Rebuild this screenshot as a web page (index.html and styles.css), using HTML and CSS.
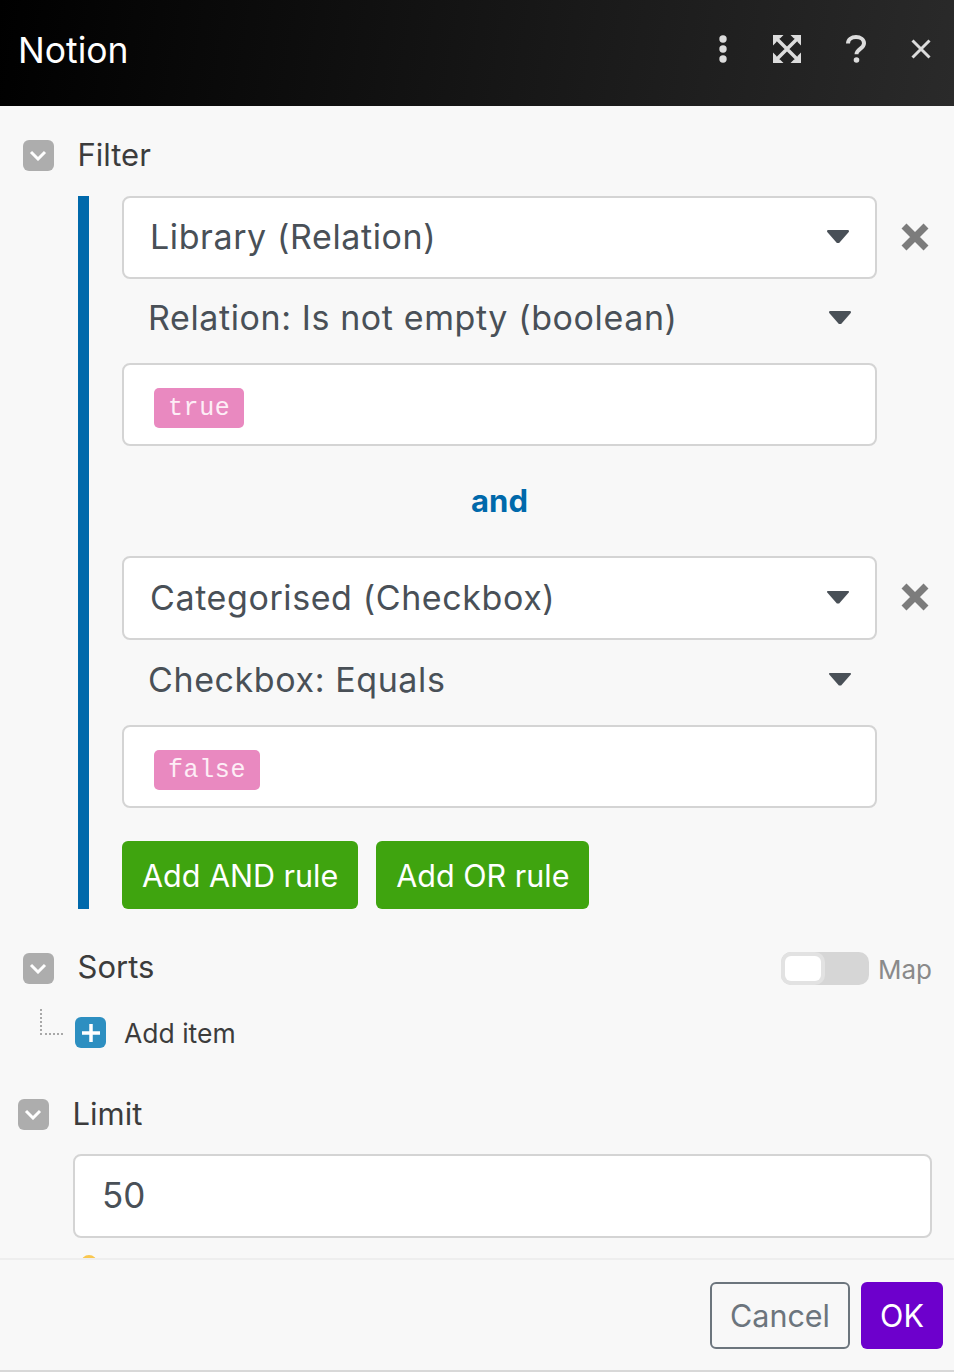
FILE: index.html
```html
<!DOCTYPE html>
<html lang="en">

<head>
  <meta charset="UTF-8">
  <meta name="viewport" content="width=device-width, initial-scale=1.0">
  <title>Notion</title>
  <link rel="stylesheet" href="styles.css">
</head>

<body>
  <div class="modal">
    <header class="modal-header">
      <h1>Notion</h1>
      <div class="header-icons">
        <svg class="icon-dots" viewBox="0 0 10 28"><circle cx="5" cy="4" r="3.700"/><circle cx="5" cy="14" r="3.700"/><circle cx="5" cy="24" r="3.700"/></svg>
        <svg class="icon-expand" viewBox="0 0 28 28"><path d="M0 0h10.500L7.500 3 6 4 4 6 3 7.500 0 10.500zM28 0v10.500l-3-3L24 6l-2-2-1.500-1-3-3zM28 28H17.500l3-3L22 24l2-2 1-1.500 3-3zM0 28V17.500l3 3L4 22l2 2 1.500 1 3 3z"/><path class="expand-x" d="M3 3l22 22M25 3L3 25"/></svg>
        <svg class="icon-help" viewBox="0 0 20 28"><path class="help-stroke" d="M2 8.500C2 4.500 5.500 2 10 2c4.500 0 8 2.500 8 6.300 0 5.500-7.500 5.700-7.500 11"/><circle cx="10.500" cy="25" r="2.800"/></svg>
        <svg class="icon-close" viewBox="0 0 20 20"><path d="M1.500 1.500l17 17M18.500 1.500l-17 17"/></svg>
      </div>
    </header>

    <main class="modal-body">
      <div class="section-head">
        <span class="collapse"><svg viewBox="0 0 18 11"><path d="M2 2l7 7 7-7"/></svg></span>
        <span class="section-title">Filter</span>
      </div>

      <div class="filter-block">
        <div class="rule">
          <div class="rule-row">
            <div class="field select-field">Library (Relation)<span class="caret"></span></div>
            <svg class="rule-remove" viewBox="0 0 28 28"><path d="M3 3l22 22M25 3L3 25"/></svg>
          </div>
          <div class="operator">Relation: Is not empty (boolean)<span class="caret"></span></div>
          <div class="field value-field"><span class="tag">true</span></div>
        </div>

        <div class="and-label">and</div>

        <div class="rule rule-second">
          <div class="rule-row">
            <div class="field select-field">Categorised (Checkbox)<span class="caret"></span></div>
            <svg class="rule-remove" viewBox="0 0 28 28"><path d="M3 3l22 22M25 3L3 25"/></svg>
          </div>
          <div class="operator">Checkbox: Equals<span class="caret"></span></div>
          <div class="field value-field"><span class="tag">false</span></div>
        </div>

        <div class="rule-buttons">
          <button class="btn-green">Add AND rule</button>
          <button class="btn-green">Add OR rule</button>
        </div>
      </div>

      <div class="section-head sorts-head">
        <span class="collapse"><svg viewBox="0 0 18 11"><path d="M2 2l7 7 7-7"/></svg></span>
        <span class="section-title">Sorts</span>
        <div class="map-toggle">
          <span class="toggle"><span class="toggle-knob"></span></span>
          <span class="map-label">Map</span>
        </div>
      </div>

      <div class="add-item">
        <span class="tree-line"></span>
        <span class="plus"><svg viewBox="0 0 20 20"><path d="M10 1v18M1 10h18"/></svg></span>
        <span class="add-label">Add item</span>
      </div>

      <div class="section-head limit-head">
        <span class="collapse"><svg viewBox="0 0 18 11"><path d="M2 2l7 7 7-7"/></svg></span>
        <span class="section-title">Limit</span>
      </div>
      <div class="field limit-field">50</div>
      <span class="hint-dot"></span>
    </main>

    <footer class="modal-footer">
      <button class="btn-cancel">Cancel</button>
      <button class="btn-ok">OK</button>
    </footer>
  </div>
</body>

</html>
```

FILE: styles.css
```css
* {
  margin: 0;
  padding: 0;
  box-sizing: border-box;
}

body {
  font-family: 'Inter', sans-serif;
  background-color: #f8f8f8;
  color: #3c3c3c;
}

.modal {
  width: 954px;
  height: 1372px;
  display: flex;
  flex-direction: column;
  border-bottom: 2px solid #d8d8d8;
}

.modal-header {
  height: 106px;
  flex: none;
  display: flex;
  justify-content: space-between;
  align-items: center;
  padding: 0 23px 0 18px;
  background: linear-gradient(100deg, #000 0%, #2a2a2a 100%);
}

.modal-header h1 {
  font-size: 35.500px;
  font-weight: 400;
  color: #fff;
  margin-top: -6px;
}

.header-icons {
  display: flex;
  align-items: center;
  margin-top: -8px;
}

.header-icons svg {
  display: block;
  fill: #dcdcdc;
}

.icon-dots {
  width: 10px;
  height: 28px;
  margin-right: 45px;
}

.icon-expand {
  width: 28px;
  height: 28px;
  margin-right: 45px;
}

.expand-x,
.help-stroke,
.icon-close path {
  fill: none;
  stroke: #dcdcdc;
}

.expand-x {
  stroke-width: 3.500;
}

.help-stroke {
  stroke-width: 4;
}

.icon-help {
  width: 20px;
  height: 28px;
  margin-right: 45px;
}

.icon-close {
  width: 20px;
  height: 20px;
}

.icon-close path {
  stroke-width: 3;
}

.modal-body {
  flex: 1;
  position: relative;
  overflow: hidden;
  padding: 34px 22px 0 23px;
}

.section-head {
  display: flex;
  align-items: center;
  height: 31px;
}

.collapse {
  width: 30.500px;
  height: 30.500px;
  flex: none;
  display: flex;
  align-items: center;
  justify-content: center;
  background-color: #adadad;
  border-radius: 6px;
}

.collapse svg {
  width: 18px;
  height: 11px;
  fill: none;
  stroke: #fff;
  stroke-width: 3;
}

.section-title {
  font-size: 31px;
  margin: -2px 0 0 24px;
  color: #3c3c3c;
}

.filter-block {
  margin: 25px 0 0 55px;
  padding-left: 33px;
  border-left: 11px solid #0069ab;
  height: 713px;
}

.rule-row {
  display: flex;
  align-items: center;
}

.field {
  background-color: #fff;
  border: 2px solid #d4d4d4;
  border-radius: 8px;
  color: #495057;
}

.select-field {
  width: 755px;
  height: 83px;
  display: flex;
  align-items: center;
  justify-content: space-between;
  padding: 0 26px 2px 26px;
  font-size: 34px;
  letter-spacing: 0.600px;
}

.rule-second .select-field {
  height: 84px;
}

.rule-second .operator {
  height: 85px;
}

.caret {
  width: 22px;
  height: 13px;
  background-color: #495057;
  clip-path: polygon(2% 0, 98% 0, 100% 14%, 55% 100%, 45% 100%, 0 14%);
}

.rule-remove {
  width: 28px;
  height: 28px;
  margin: -2px 0 0 24px;
  fill: none;
  stroke: #7c7c7c;
  stroke-width: 7;
}

.operator {
  width: 755px;
  height: 84px;
  display: flex;
  align-items: center;
  justify-content: space-between;
  padding: 0 26px 7px;
  font-size: 34px;
  letter-spacing: 0.600px;
  color: #495057;
}

.value-field {
  width: 755px;
  height: 83px;
  display: flex;
  align-items: center;
  padding: 6px 30px 0;
}

.tag {
  height: 40px;
  line-height: 41px;
  padding: 0 14px;
  background-color: #e989c0;
  border-radius: 5px;
  color: #fdeef6;
  font-family: 'Liberation Mono', monospace;
  font-size: 25px;
  letter-spacing: 0.600px;
}

.and-label {
  width: 755px;
  height: 110px;
  line-height: 110px;
  text-align: center;
  font-size: 31px;
  font-weight: 700;
  color: #0069ab;
}

.rule-buttons {
  display: flex;
  gap: 18px;
  margin-top: 33px;
}

button {
  font-family: 'Inter', sans-serif;
  font-size: 30.500px;
  border-radius: 6px;
  border: none;
  cursor: pointer;
}

.btn-green {
  height: 68px;
  padding: 0 20px;
  background-color: #3fa40f;
  color: #fff;
}

.sorts-head {
  margin-top: 44px;
}

.sorts-head .section-title {
  margin-top: -4px;
}

.map-toggle {
  display: flex;
  align-items: center;
  margin-left: auto;
  margin-top: -1px;
}

.toggle {
  width: 88px;
  height: 33px;
  padding: 4px;
  display: block;
  background-color: #d6d6d6;
  border-radius: 10px;
}

.toggle-knob {
  display: block;
  width: 36px;
  height: 25px;
  background-color: #fff;
  border-radius: 6px;
  box-shadow: 0 0 0 4px #e2e2e2;
}

.map-label {
  font-size: 26px;
  color: #8a8a8a;
  margin: 2px 0 0 9px;
}

.add-item {
  position: relative;
  display: flex;
  align-items: center;
  margin: 33px 0 0 52px;
  height: 31px;
}

.tree-line {
  position: absolute;
  left: -35px;
  top: -8px;
  width: 23px;
  height: 26px;
  border-left: 2px dotted #a8a8a8;
  border-bottom: 2px dotted #a8a8a8;
}

.plus {
  width: 31px;
  height: 31px;
  display: flex;
  align-items: center;
  justify-content: center;
  background-color: #2d8fc1;
  border-radius: 6px;
}

.plus svg {
  width: 20px;
  height: 20px;
  fill: none;
  stroke: #fff;
  stroke-width: 3.500;
}

.add-label {
  font-size: 26.500px;
  margin: 0 0 0 18px;
  color: #3c3c3c;
}

.limit-head {
  margin: 51px 0 0 -5px;
}

.limit-field {
  width: 859px;
  height: 84px;
  margin: 24px 0 0 50px;
  display: flex;
  align-items: center;
  padding: 0 0 2px 27px;
  font-size: 35px;
}

.hint-dot {
  position: absolute;
  left: 81px;
  top: 1149px;
  width: 16px;
  height: 16px;
  border: 3px solid #f9c74f;
  border-radius: 50%;
}

.modal-footer {
  height: 112px;
  flex: none;
  display: flex;
  justify-content: flex-end;
  align-items: flex-start;
  gap: 11px;
  padding: 22px 11px 0 0;
  border-top: 2px solid #eeeeee;
}

.btn-cancel {
  width: 140px;
  height: 67px;
  background: transparent;
  border: 2px solid #6c757d;
  color: #6c757d;
}

.btn-ok {
  width: 82px;
  height: 67px;
  background-color: #6d00cc;
  color: #fff;
}
```
